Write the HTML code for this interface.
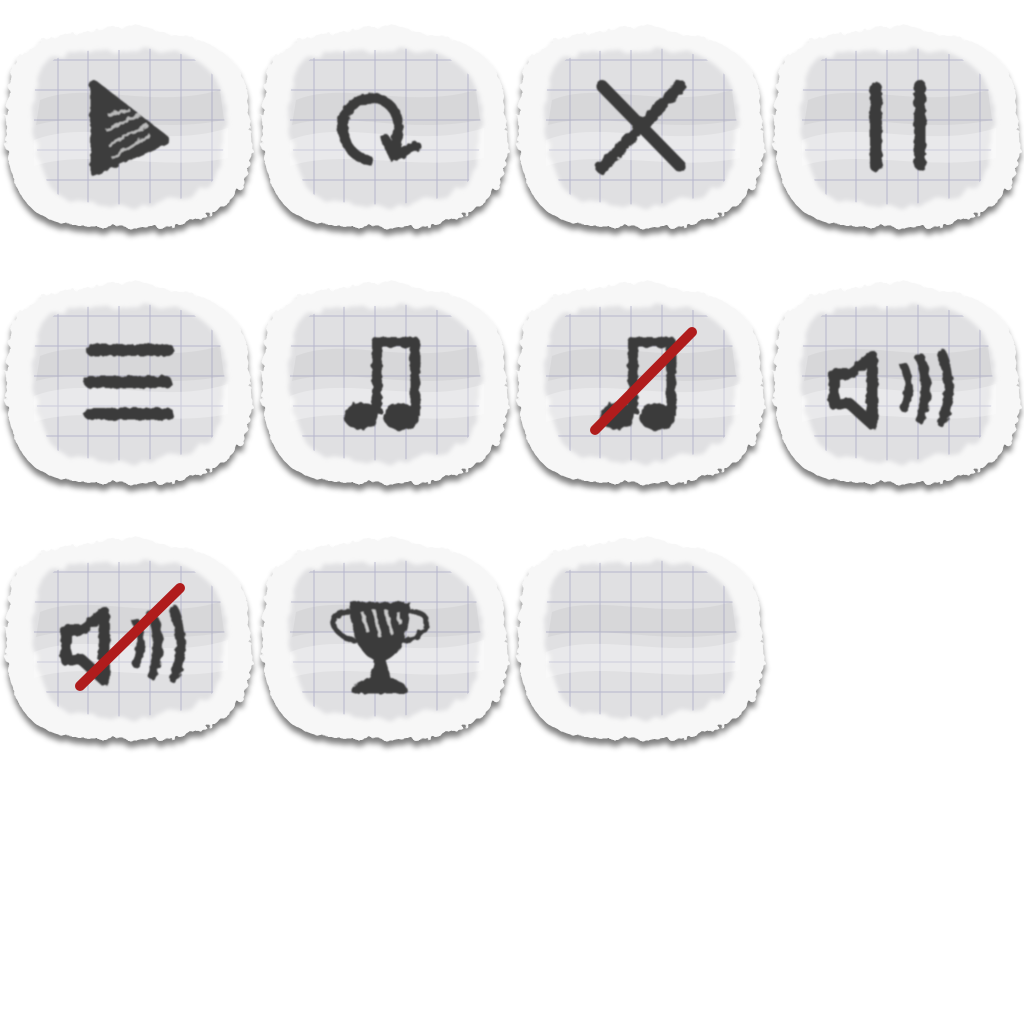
<!DOCTYPE html>
<html><head><meta charset="utf-8"><style>html,body{margin:0;padding:0;background:#fff;width:1024px;height:1024px;overflow:hidden}</style></head>
<body>
<svg width="1024" height="1024" viewBox="0 0 1024 1024" xmlns="http://www.w3.org/2000/svg">
<defs>
<filter id="sh" x="-10%" y="-10%" width="120%" height="130%">
<feTurbulence type="fractalNoise" baseFrequency="0.12" numOctaves="2" seed="3" result="n"/>
<feDisplacementMap in="SourceGraphic" in2="n" scale="9" result="d"/>
<feGaussianBlur in="d" stdDeviation="3" result="b"/><feOffset in="b" dy="6" result="o"/>
<feColorMatrix in="o" type="matrix" values="0 0 0 0 0  0 0 0 0 0  0 0 0 0 0  0 0 0 0.5 0" result="s"/>
<feMerge><feMergeNode in="s"/><feMergeNode in="d"/></feMerge></filter>
<filter id="rough" x="-10%" y="-10%" width="120%" height="120%">
<feTurbulence type="fractalNoise" baseFrequency="0.05" numOctaves="2" seed="7" result="n"/>
<feDisplacementMap in="SourceGraphic" in2="n" scale="14" result="d"/><feGaussianBlur in="d" stdDeviation="2"/></filter>
<filter id="ink" x="-20%" y="-20%" width="140%" height="140%">
<feTurbulence type="fractalNoise" baseFrequency="0.15" numOctaves="2" seed="5" result="n"/>
<feDisplacementMap in="SourceGraphic" in2="n" scale="5" result="d"/>
<feGaussianBlur in="d" stdDeviation="0.7"/></filter>
<clipPath id="ic"><path d="M36,80 C42,56 80,48 120,50 C170,44 214,57 222,95 C228,135 225,178 200,193 C160,208 94,207 62,197 C36,184 30,124 36,80Z"/></clipPath>
<g id="paper">
<path filter="url(#sh)" fill="#f7f7f7" d="M10,85 C6,52 42,34 92,32 C112,22 150,24 172,36 C212,36 250,62 247,108 C256,150 252,190 222,206 C202,226 150,231 120,226 C70,231 30,218 20,192 C4,170 4,122 10,85Z"/>
<path filter="url(#rough)" fill="#e0e0e2" d="M36,80 C42,56 80,48 120,50 C170,44 214,57 222,95 C228,135 225,178 200,193 C160,208 94,207 62,197 C36,184 30,124 36,80Z"/>
<g clip-path="url(#ic)" stroke="#a9a9c4" stroke-width="1" opacity="0.75">
<path d="M28,60H232M28,90H232M28,120H232M28,150H232M28,180H232M58,40V215M88,40V215M119,40V215M150,40V215M181,40V215M212,40V215"/>
</g>
<path fill="#fff" opacity="0.3" d="M34,140 C90,118 160,150 228,128 L228,158 C160,172 90,148 34,166Z"/>
<path fill="#999" opacity="0.12" d="M40,100 C90,80 150,110 220,90 L224,120 C150,135 90,110 36,125Z"/>
</g>
<g id="note" fill="#3a3a3a" stroke="#3a3a3a" filter="url(#ink)">
<path d="M121,158V86H159V160" fill="none" stroke-width="10" stroke-linejoin="round"/>
<ellipse cx="105" cy="160" rx="17" ry="13"/>
<ellipse cx="145" cy="161" rx="17" ry="13"/>
</g>
<g id="spk" fill="#3a3a3a" stroke="#3a3a3a" filter="url(#ink)">
<path d="M66,118H82L104,100V168L82,148H66Z" fill="none" stroke-width="11" stroke-linejoin="round"/>
<path d="M136,110 C142,125 142,140 136,152" fill="none" stroke-width="8" stroke-linecap="round"/>
<path d="M152,102 C160,122 160,142 152,162" fill="none" stroke-width="10" stroke-linecap="round"/>
<path d="M174,98 C183,120 183,142 174,166" fill="none" stroke-width="10" stroke-linecap="round"/>
</g>
</defs>

<g transform="translate(0,0)"><use href="#paper"/>
<g filter="url(#ink)"><path d="M94,84 L94,172 L166,140Z" fill="#3e3e3e" stroke="#3e3e3e" stroke-width="8" stroke-linejoin="round"/>
<path d="M108,115 L130,110 M106,130 L140,115 M108,145 L148,125 M112,158 L150,135" stroke="#bbb" stroke-width="3"/></g></g>
<g transform="translate(256,0)"><use href="#paper"/>
<g filter="url(#ink)" fill="none" stroke="#3a3a3a" stroke-width="10" stroke-linecap="round">
<path d="M112,160 C85,155 78,115 100,102 C120,90 145,105 142,130 L140,150"/>
<path d="M130,140 L138,156 L160,146"/></g></g>
<g transform="translate(512,0)"><use href="#paper"/>
<g filter="url(#ink)" stroke="#3a3a3a" stroke-width="12" stroke-linecap="round"><path d="M90,86 L168,166 M168,86 L90,168"/></g></g>
<g transform="translate(768,0)"><use href="#paper"/>
<g filter="url(#ink)" stroke="#3a3a3a" stroke-width="12" stroke-linecap="round"><path d="M108,88V166 M152,86V164"/></g></g>

<g transform="translate(0,256)"><use href="#paper"/>
<g filter="url(#ink)" stroke="#3a3a3a" stroke-width="12" stroke-linecap="round"><path d="M92,94H168 M90,126H166 M90,158H168"/></g></g>
<g transform="translate(256,256)"><use href="#paper"/><use href="#note"/></g>
<g transform="translate(512,256)"><use href="#paper"/><use href="#note"/>
<path d="M83,174 L180,76" stroke="#b01c1c" stroke-width="10" stroke-linecap="round"/></g>
<g transform="translate(768,256)"><use href="#paper"/><use href="#spk"/></g>

<g transform="translate(0,512)"><use href="#paper"/><use href="#spk"/>
<path d="M80,174 L180,76" stroke="#b01c1c" stroke-width="10" stroke-linecap="round"/></g>
<g transform="translate(256,512)"><use href="#paper"/>
<g filter="url(#ink)" fill="#3a3a3a" stroke="#3a3a3a">
<path d="M96,92H152 C152,125 140,145 124,148 C108,145 96,125 96,92Z" stroke-width="4"/>
<path d="M96,100 C78,98 72,110 82,120 C90,128 100,130 104,128 M152,100 C170,98 176,110 166,120 C158,128 148,130 144,128" fill="none" stroke-width="5"/>
<path d="M120,148 L128,148 L134,168 C145,170 150,174 150,180 H98 C98,174 103,170 114,168Z" stroke-width="3"/>
<path d="M106,100 L112,120 M118,98 L124,125 M130,98 L136,122 M142,100 L144,112" stroke="#ccc" stroke-width="3"/></g></g>
<g transform="translate(512,512)"><use href="#paper"/></g>
</svg>
</body></html>
